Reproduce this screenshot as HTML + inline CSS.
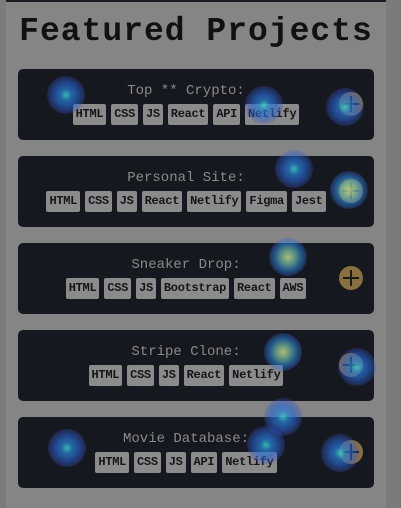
<!DOCTYPE html>
<html><head><style>
html,body{margin:0;padding:0;width:401px;height:508px;overflow:hidden;background:#7b7b7b;font-family:"Liberation Mono",monospace}
.panel{position:absolute;left:6px;top:0;width:380px;height:508px;background:#858585;border-top:2px solid #1c1c22;box-sizing:border-box}
h1{position:absolute;left:0;top:13px;width:392px;margin:0;text-align:center;font-size:33px;font-weight:bold;color:#111;letter-spacing:1px}
.card{position:absolute;left:18px;width:356px;height:71px;background:#16181f;border-radius:5px}
.t{position:absolute;top:14px;left:0;width:336px;text-align:center;color:#8a8a8a;font-size:14px}
.tags{position:absolute;top:35px;left:0;width:336px;text-align:center;font-size:0}
.tags span{display:inline-block;background:#8b8b8b;color:#151515;font-weight:bold;font-size:12px;height:21px;line-height:21px;padding:0 3px;margin:0 2.5px;border-radius:2px;letter-spacing:-0.3px}
.plus{position:absolute;left:321px;top:23px;width:24px;height:24px;border-radius:50%;background:#8a6f3f}
.plus:before{content:"";position:absolute;left:4px;top:11px;width:16px;height:2px;background:#1a1a1a}
.plus:after{content:"";position:absolute;left:11px;top:4px;width:2px;height:16px;background:#1a1a1a}
.b{position:absolute;width:38px;height:38px;margin:-19px 0 0 -19px;border-radius:50%;background:radial-gradient(circle,rgba(60,200,190,.9) 0,rgba(40,130,210,.75) 20%,rgba(40,100,210,.6) 45%,rgba(60,80,200,.25) 70%,rgba(60,80,200,0) 100%)}
.y{background:radial-gradient(circle,rgba(200,215,140,.85) 0,rgba(120,190,160,.75) 25%,rgba(40,130,210,.6) 50%,rgba(60,80,200,.25) 72%,rgba(60,80,200,0) 100%)}
</style></head><body>
<div class="panel"></div>
<h1>Featured Projects</h1>
<div class="card" style="top:69px"><div class="t">Top ** Crypto:</div><div class="tags"><span>HTML</span><span>CSS</span><span>JS</span><span>React</span><span>API</span><span>Netlify</span></div><div class="plus"></div></div>
<div class="card" style="top:156px"><div class="t">Personal Site:</div><div class="tags"><span>HTML</span><span>CSS</span><span>JS</span><span>React</span><span>Netlify</span><span>Figma</span><span>Jest</span></div><div class="plus"></div></div>
<div class="card" style="top:243px"><div class="t">Sneaker Drop:</div><div class="tags"><span>HTML</span><span>CSS</span><span>JS</span><span>Bootstrap</span><span>React</span><span>AWS</span></div><div class="plus"></div></div>
<div class="card" style="top:330px"><div class="t">Stripe Clone:</div><div class="tags"><span>HTML</span><span>CSS</span><span>JS</span><span>React</span><span>Netlify</span></div><div class="plus"></div></div>
<div class="card" style="top:417px"><div class="t">Movie Database:</div><div class="tags"><span>HTML</span><span>CSS</span><span>JS</span><span>API</span><span>Netlify</span></div><div class="plus"></div></div>
<div class="b" style="left:66px;top:95px"></div>
<div class="b" style="left:264px;top:105px"></div>
<div class="b" style="left:345px;top:107px"></div>
<div class="b" style="left:294px;top:169px"></div>
<div class="b y" style="left:349px;top:190px"></div>
<div class="b y" style="left:288px;top:257px"></div>
<div class="b y" style="left:283px;top:352px"></div>
<div class="b" style="left:357px;top:367px"></div>
<div class="b" style="left:67px;top:448px"></div>
<div class="b" style="left:283px;top:417px"></div>
<div class="b" style="left:266px;top:445px"></div>
<div class="b" style="left:340px;top:453px"></div>
</body></html>
